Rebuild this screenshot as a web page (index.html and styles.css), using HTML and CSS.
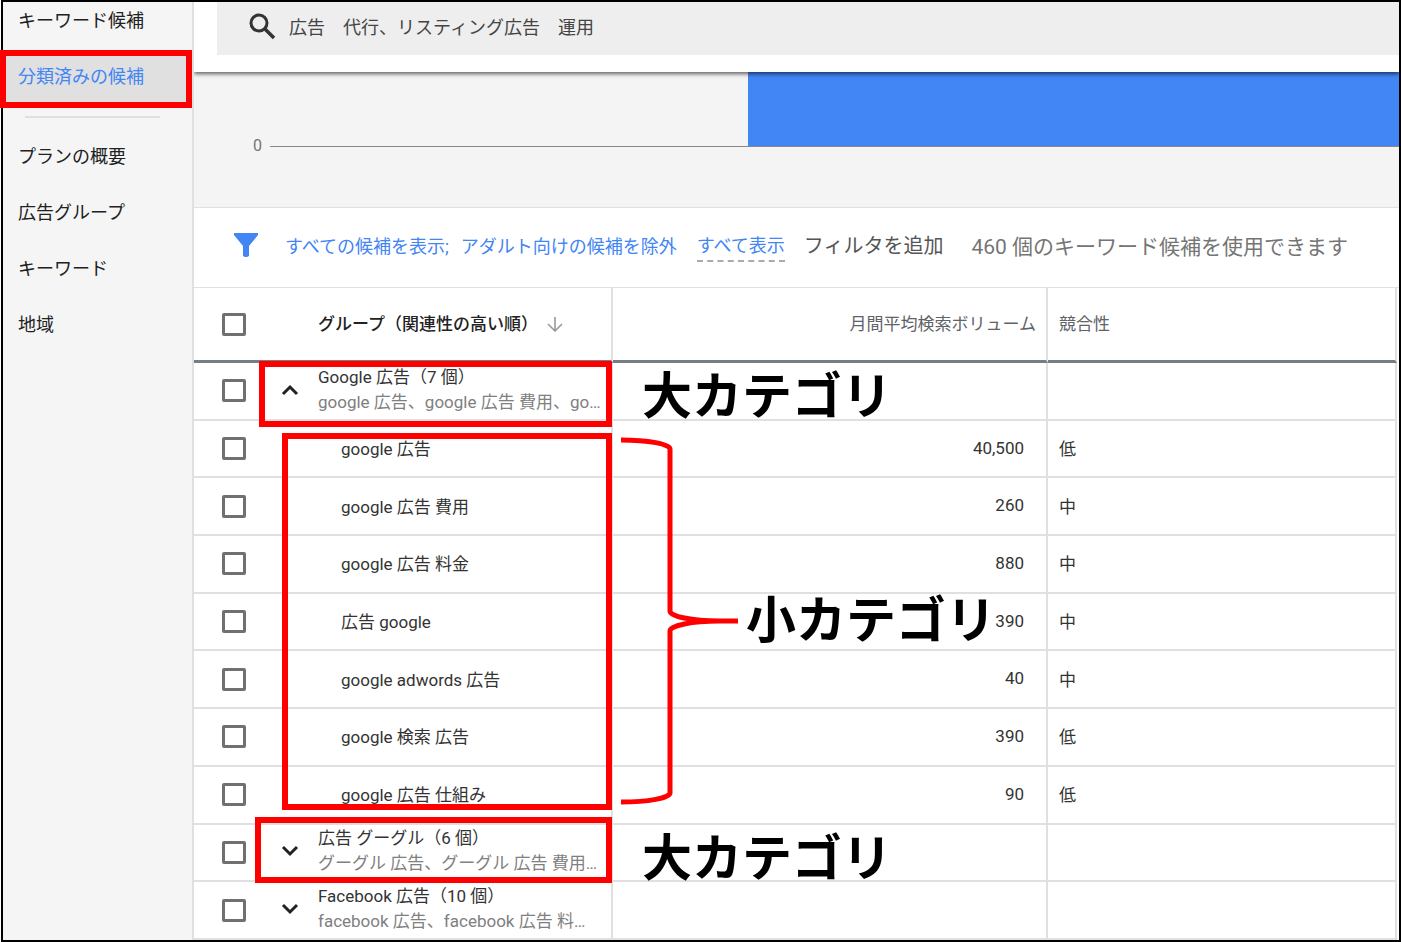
FILE: index.html
```html
<!DOCTYPE html>
<html lang="ja">
<head>
<meta charset="utf-8">
<title>分類済みの候補</title>
<link rel="stylesheet" href="styles.css">
</head>
<body>
<div class="page">
<div class="frame">

	<nav class="sidebar">
		<a href="#">キーワード候補</a>
		<a href="#" class="active">分類済みの候補</a>
		<hr>
		<a href="#">プランの概要</a>
		<a href="#">広告グループ</a>
		<a href="#">キーワード</a>
		<a href="#">地域</a>
	</nav>

	<main class="main">
		<div class="topbar">
			<label class="search">
				<svg width="28" height="28" viewBox="0 0 28 28"><circle cx="11" cy="11" r="8" fill="none" stroke="#333" stroke-width="3"/><path d="M16 16l10 10" stroke="#333" stroke-width="3.6"/></svg>
				<input type="text" aria-label="検索" value="広告　代行、リスティング広告　運用">
			</label>
		</div>

		<div class="chart">
			<span class="zero">0</span>
			<div class="plot"><div class="bar" style="width: 57.7%"></div></div>
		</div>

		<div class="filters">
			<button class="funnel" aria-label="フィルタ"><svg width="24" height="24" viewBox="0 0 24 24"><path d="M0 0h24v2l-9 11v10l-2 1h-2l-2-1V13L0 2z" fill="#4285f4"/></svg></button>
			<a href="#" class="f1">すべての候補を表示;</a>
			<a href="#" class="f2">アダルト向けの候補を除外</a>
			<a href="#" class="all">すべて表示</a>
			<button class="add">フィルタを追加</button>
			<span class="count">460 個のキーワード候補を使用できます</span>
		</div>

		<div class="tablewrap">
		<table>
			<thead>
			<tr>
				<th class="check"><input type="checkbox" aria-label="すべて選択"></th>
				<th class="name"><span class="sort">グループ（関連性の高い順）<svg width="16" height="16" viewBox="0 0 16 16"><path d="M8 1v13M1 8l7 7 7-7" fill="none" stroke="#999" stroke-width="1.6"/></svg></span></th>
				<th class="vol">月間平均検索ボリューム</th>
				<th class="comp">競合性</th>
			</tr>
			</thead>
			<tbody>
			<tr>
				<td class="check"><input type="checkbox" aria-label="Google 広告"></td>
				<td><div class="group">
					<button aria-label="閉じる"><svg width="18" height="12" viewBox="0 0 18 12"><path d="M2 10l7-7 7 7" fill="none" stroke="#222" stroke-width="3"/></svg></button>
					<div>Google 広告（7 個）<small>google 広告、google 広告 費用、go…</small></div>
				</div></td>
				<td class="vol"></td><td></td>
			</tr>
			<tr>
				<td class="check"><input type="checkbox" aria-label="google 広告"></td>
				<td class="kw">google 広告</td><td class="vol">40,500</td><td>低</td>
			</tr>
			<tr>
				<td class="check"><input type="checkbox" aria-label="google 広告 費用"></td>
				<td class="kw">google 広告 費用</td><td class="vol">260</td><td>中</td>
			</tr>
			<tr>
				<td class="check"><input type="checkbox" aria-label="google 広告 料金"></td>
				<td class="kw">google 広告 料金</td><td class="vol">880</td><td>中</td>
			</tr>
			<tr>
				<td class="check"><input type="checkbox" aria-label="広告 google"></td>
				<td class="kw">広告 google</td><td class="vol">390</td><td>中</td>
			</tr>
			<tr>
				<td class="check"><input type="checkbox" aria-label="google adwords 広告"></td>
				<td class="kw">google adwords 広告</td><td class="vol">40</td><td>中</td>
			</tr>
			<tr>
				<td class="check"><input type="checkbox" aria-label="google 検索 広告"></td>
				<td class="kw">google 検索 広告</td><td class="vol">390</td><td>低</td>
			</tr>
			<tr>
				<td class="check"><input type="checkbox" aria-label="google 広告 仕組み"></td>
				<td class="kw">google 広告 仕組み</td><td class="vol">90</td><td>低</td>
			</tr>
			<tr>
				<td class="check"><input type="checkbox" aria-label="広告 グーグル"></td>
				<td><div class="group">
					<button aria-label="開く"><svg width="18" height="12" viewBox="0 0 18 12"><path d="M2 2l7 7 7-7" fill="none" stroke="#222" stroke-width="3"/></svg></button>
					<div>広告 グーグル（6 個）<small>グーグル 広告、グーグル 広告 費用…</small></div>
				</div></td>
				<td class="vol"></td><td></td>
			</tr>
			<tr>
				<td class="check"><input type="checkbox" aria-label="Facebook 広告"></td>
				<td><div class="group">
					<button aria-label="開く"><svg width="18" height="12" viewBox="0 0 18 12"><path d="M2 2l7 7 7-7" fill="none" stroke="#222" stroke-width="3"/></svg></button>
					<div>Facebook 広告（10 個）<small>facebook 広告、facebook 広告 料…</small></div>
				</div></td>
				<td class="vol"></td><td></td>
			</tr>
			</tbody>
		</table>
		</div>
	</main>
</div>

<!-- red marks and captions over the page -->
<div class="mark mark-menu"></div>
<div class="mark mark-big1"></div>
<div class="mark mark-small"></div>
<div class="mark mark-big2"></div>
<svg class="brace" width="120" height="370" viewBox="0 0 120 370"><path d="M1 5A49 9 0 0 1 50 14V176A49 10 0 0 0 99 186H118H99A49 10 0 0 0 50 196V358A49 9 0 0 1 1 367" fill="none" stroke="#f00" stroke-width="5"/></svg>
<div class="caption cap-big1">大カテゴリ</div>
<div class="caption cap-small">小カテゴリ</div>
<div class="caption cap-big2">大カテゴリ</div>
</div>
</body>
</html>
```

FILE: styles.css
```css
* { box-sizing: border-box; }
body {
	margin: 0;
	background: #fff;
	font-family: Roboto, "Noto Sans CJK JP", sans-serif;
	font-size: 17px;
	color: #333;
}
a { text-decoration: none; color: #4285f4; }
button { border: 0; padding: 0; background: none; font-family: inherit; }
svg { display: block; }
.page { position: relative; height: 100vh; padding-left: 1px; overflow: hidden; }
.frame {
	display: flex;
	height: 100%;
	border: 2px solid #000;
	overflow: hidden;
}

/* left menu */
.sidebar {
	flex: 0 0 191px;
	background: #f5f5f5;
	border-right: 2px solid #e0e0e0;
}
.sidebar a {
	display: block;
	height: 56px;
	line-height: 54px;
	padding-left: 15px;
	font-size: 18px;
	color: #212121;
}
.sidebar a:first-child { margin-top: -8px; }
.sidebar a.active { background: #e0e0e0; color: #4285f4; }
.sidebar hr {
	height: 2px;
	margin: 10px 32px 12px 22px;
	border: 0;
	background: #e0e0e0;
}

.main { flex: 1; min-width: 0; display: flex; flex-direction: column; overflow: hidden; }
.topbar {
	position: relative;
	flex: 0 0 70px;
	padding-left: 23px;
	background: #fff;
	box-shadow: 0 2px 4px rgba(0,0,0,0.6);
}
.search {
	display: flex;
	align-items: center;
	gap: 13px;
	height: 53px;
	padding: 0 0 6px 31px;
	background: #eee;
}
.search input {
	flex: 1;
	border: 0;
	padding: 0;
	background: none;
	font-family: inherit;
	font-size: 18px;
	color: #444;
}

/* chart */
.chart {
	flex: 0 0 136px;
	display: flex;
	align-items: flex-start;
	gap: 8px;
	background: #f4f4f4;
	border-bottom: 1px solid #e0e0e0;
}
.zero { width: 68px; padding-top: 63px; text-align: right; font-size: 16px; line-height: 22px; color: #757575; }
.plot { flex: 1; display: flex; justify-content: flex-end; height: 75px; border-bottom: 1px solid #888; }
.bar { background: #4285f4; }

.filters {
	flex: 0 0 80px;
	display: flex;
	align-items: center;
	padding: 0 0 6px 40px;
	border-bottom: 1px solid #e0e0e0;
	white-space: nowrap;
	font-size: 18px;
}
.f1 { margin-left: 27px; }
.f2 { margin-left: 12px; }
.all { margin: 4px 19px 0 20px; padding-bottom: 3px; border-bottom: 2px dashed #aaa; }
.add { font-size: 20px; color: #555; }
.count { margin-left: 28px; font-size: 21px; color: #757575; }

/* keyword table */
.tablewrap { flex: 1; min-height: 0; padding-right: 2px; }
table {
	width: 100%;
	height: 100%;
	table-layout: fixed;
	border-collapse: separate;
	border-spacing: 0;
}
th, td {
	height: 57px;
	padding: 0 0 0 11px;
	border-right: 2px solid #e0e0e3;
	border-bottom: 2px solid #e0e0e3;
	text-align: left;
}
td { padding-bottom: 2px; }
th {
	height: 75px;
	padding-bottom: 4px;
	border-bottom: 3px solid #757f83;
	font-weight: 400;
	color: #5f6368;
}
th.name { width: 339px; padding-left: 44px; font-weight: 500; color: #222; }
.check { width: 80px; padding: 0 0 0 28px; border-right: 0; }
.sort { display: flex; align-items: center; gap: 9px; }
.sort svg { margin-top: 4px; }
.vol { width: 435px; padding-right: 22px; text-align: right; }
th.vol { padding-right: 10px; }
.kw { padding-left: 67px; }
.check input {
	display: block;
	appearance: none;
	width: 24px;
	height: 23px;
	margin: 0;
	border: 3px solid #707070;
	border-radius: 2px;
	background: #fff;
}
.group { display: flex; align-items: center; gap: 19px; margin-left: -4px; line-height: 25px; white-space: nowrap; }
.group small { display: block; font-size: 17px; color: #808080; }

/* marks */
.mark { position: absolute; border: 6px solid #f00; }
.mark-menu { left: 0; top: 50px; width: 192px; height: 58px; }
.mark-big1 { left: 259px; top: 361px; width: 353px; height: 66px; }
.mark-small { left: 282px; top: 433px; width: 330px; height: 377px; }
.mark-big2 { left: 255px; top: 817px; width: 357px; height: 66px; }
.brace { position: absolute; left: 620px; top: 435px; }
.caption {
	position: absolute;
	font-family: "Noto Sans CJK JP", sans-serif;
	font-size: 50px;
	font-weight: 700;
	line-height: 60px;
	color: #000;
}
.cap-big1 { left: 642px; top: 362px; }
.cap-small { left: 746px; top: 586px; }
.cap-big2 { left: 642px; top: 824px; }
```
